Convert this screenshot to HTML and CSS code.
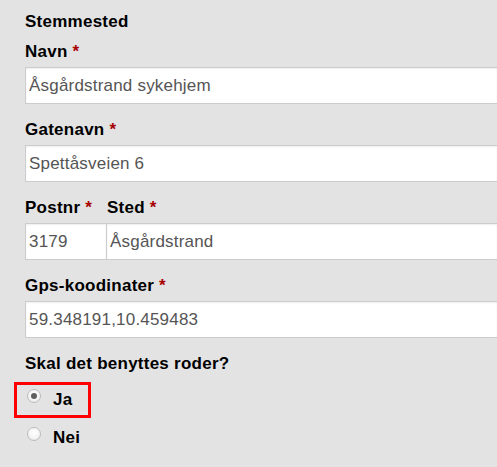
FILE: index.html
```html
<!DOCTYPE html>
<html lang="no">
<head>
<meta charset="utf-8">
<title>Stemmested</title>
<link rel="stylesheet" href="styles.css">
</head>
<body>
<form class="form">
  <div class="heading">Stemmested</div>

  <div class="group">
    <label class="label">Navn <span class="req">*</span></label>
    <input class="field" type="text" value="Åsgårdstrand sykehjem">
  </div>

  <div class="group">
    <label class="label">Gatenavn <span class="req">*</span></label>
    <input class="field" type="text" value="Spettåsveien 6">
  </div>

  <div class="group split">
    <div class="col-post">
      <label class="label">Postnr <span class="req">*</span></label>
      <input class="field field-post" type="text" value="3179">
    </div>
    <div class="col-place">
      <label class="label">Sted <span class="req">*</span></label>
      <input class="field field-place" type="text" value="Åsgårdstrand">
    </div>
  </div>

  <div class="group">
    <label class="label">Gps-koodinater <span class="req">*</span></label>
    <input class="field" type="text" value="59.348191,10.459483">
  </div>

  <div class="question">Skal det benyttes roder?</div>
  <div class="options">
    <label class="option highlighted"><input class="radio" type="radio" name="roder" checked><span class="opt-text">Ja</span></label>
    <label class="option"><input class="radio" type="radio" name="roder"><span class="opt-text">Nei</span></label>
  </div>
</form>
</body>
</html>
```

FILE: styles.css
```css
html, body {
  margin: 0;
  padding: 0;
  overflow: hidden;
  background: #e3e3e3;
}

body {
  font-family: "Liberation Sans", Arial, sans-serif;
  font-size: 17px;
  color: #000;
}

.form {
  padding: 12px 0 0 25px;
}

.heading {
  font-weight: bold;
  line-height: 20px;
  letter-spacing: 0.25px;
  margin-bottom: 10px;
}

.group {
  margin-bottom: 16px;
}

.label {
  display: block;
  font-weight: bold;
  line-height: 20px;
  letter-spacing: 0.25px;
  margin-bottom: 5px;
}

.req {
  color: #a80000;
  font-weight: bold;
}

.field {
  display: block;
  box-sizing: border-box;
  width: 100%;
  height: 37px;
  margin: 0;
  padding: 0 0 0 3px;
  border: 1px solid #cccccc;
  border-right: none;
  border-radius: 0;
  background: #ffffff;
  box-shadow: inset 0 1px 2px rgba(0, 0, 0, 0.07);
  font-family: "Liberation Sans", Arial, sans-serif;
  font-size: 17px;
  letter-spacing: 0.2px;
  color: #555555;
  outline: none;
}

.split {
  display: flex;
}

.col-post {
  width: 81px;
  flex: none;
}

.col-place {
  flex: 1;
}

.col-place .label {
  padding-left: 1px;
}

.question {
  font-weight: bold;
  line-height: 20px;
  letter-spacing: 0.25px;
  margin-bottom: 8px;
}

.options {
  display: flex;
  flex-direction: column;
  align-items: flex-start;
  margin-left: -11px;
}

.option {
  display: flex;
  align-items: flex-start;
  box-sizing: border-box;
  width: 77px;
  height: 36px;
  padding-left: 10px;
  border: 3px solid transparent;
  margin-bottom: 2px;
}

.option.highlighted {
  border-color: #ff0000;
}

.radio {
  appearance: none;
  -webkit-appearance: none;
  flex: none;
  box-sizing: border-box;
  width: 14px;
  height: 14px;
  margin: 4px 12px 0 0;
  border: 1px solid #bdbdbd;
  border-radius: 50%;
  background: radial-gradient(circle at 50% 40%, #ffffff 0%, #f4f4f4 55%, #dedede 100%);
  position: relative;
}

.radio:checked::after {
  content: "";
  position: absolute;
  left: 3px;
  top: 3px;
  width: 6px;
  height: 6px;
  border-radius: 50%;
  background: #5f5f5f;
}

.opt-text {
  font-weight: bold;
  line-height: 30px;
  letter-spacing: 0.25px;
}
```
